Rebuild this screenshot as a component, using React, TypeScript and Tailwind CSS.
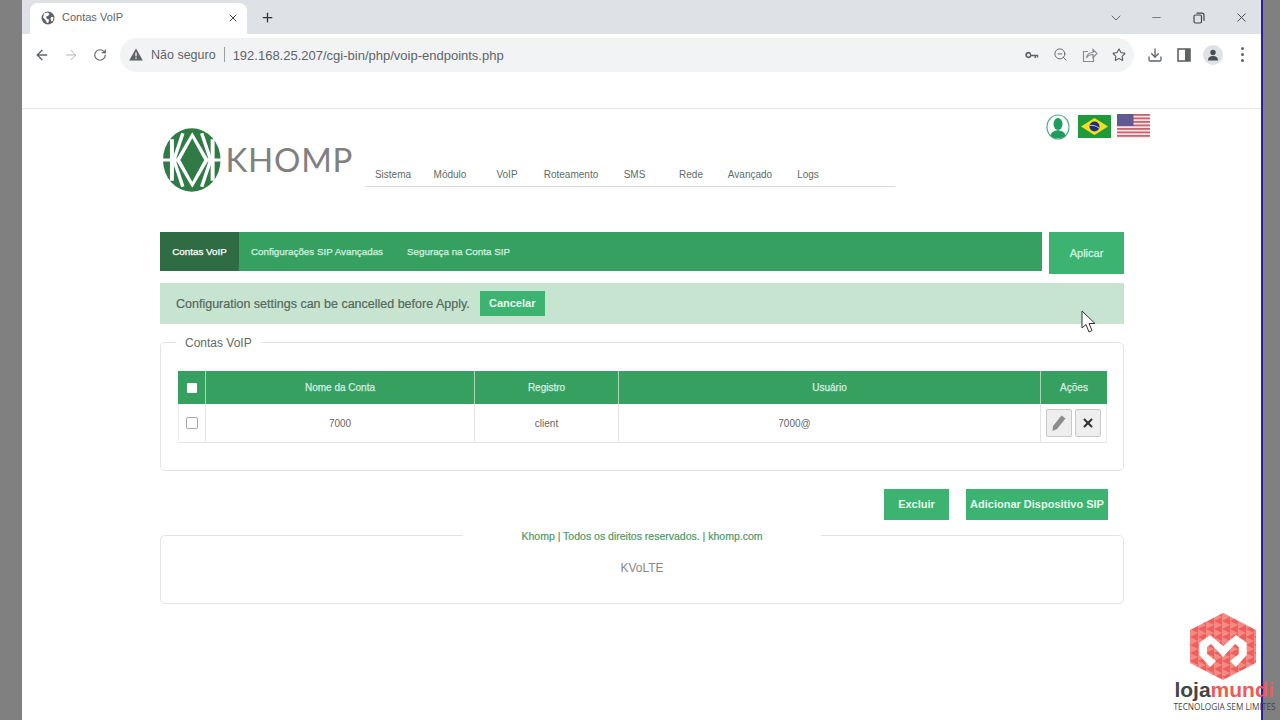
import { ArrowLeft, ArrowRight, RotateCw, ChevronDown, Minus, X, Plus, Star, Download, ZoomOut } from "lucide-react";

const navItems = [
  { label: "Sistema", width: "w-[56px]" },
  { label: "Módulo", width: "w-[58px]" },
  { label: "VoIP", width: "w-[56px]" },
  { label: "Roteamento", width: "w-[72px]" },
  { label: "SMS", width: "w-[55px]" },
  { label: "Rede", width: "w-[58px]" },
  { label: "Avançado", width: "w-[60px]" },
  { label: "Logs", width: "w-[56px]" },
];

function GlobeIcon() {
  return (
    <svg width="14" height="14" viewBox="0 0 14 14">
      <circle cx="7" cy="7" r="6.5" fill="#5f6368" />
      <path d="M3 2.5 L6.5 1.5 L8.5 3 L7 5 L5 5.5 L6 8 L8 8.5 L7.5 11.5 L6 12 L4.5 9 L2 6.5 Z" fill="#fff" />
      <path d="M10 6 L12.5 6 L12 9.5 L10.5 10.5 L9.5 8 Z" fill="#fff" />
    </svg>
  );
}

function KeyIcon() {
  return (
    <svg width="14" height="14" viewBox="0 0 14 14" fill="#5f6368">
      <path d="M3.5 3.8a3.2 3.2 0 1 0 2.9 4.5H9.5v1.6h1.4V8.3h.9v1.2h1.4V6.7H6.4a3.2 3.2 0 0 0-2.9-2.9zm0 1.7a1.5 1.5 0 1 1 0 3 1.5 1.5 0 0 1 0-3z" />
    </svg>
  );
}

function ShareIcon() {
  return (
    <svg width="16" height="16" viewBox="0 0 16 16" fill="none" stroke="#8a8d91" strokeWidth="1.2">
      <path d="M6 4.5H1.5v10h10V10" />
      <path d="M4.5 11c.5-3.5 3-5.5 6.5-5.5V2.5l4 4-4 4V7.5c-2.8 0-5 1-6.5 3.5z" />
    </svg>
  );
}

function SidePanelIcon() {
  return (
    <svg width="14" height="14" viewBox="0 0 14 14">
      <rect x="1" y="1" width="12" height="12" fill="none" stroke="#5f6368" strokeWidth="1.6" />
      <rect x="8" y="1" width="5" height="12" fill="#5f6368" />
    </svg>
  );
}

function KhompMark() {
  return (
    <svg width="60" height="66" viewBox="0 0 60 66">
      <ellipse cx="30" cy="33" rx="29" ry="32" fill="#2f7a45" />
      <path d="M30.5 5 L47 33 L30.5 61 L14 33 Z" fill="#fff" />
      <path d="M30.5 11 L42.5 33 L30.5 55 L18.5 33 Z" fill="#2f7a45" />
      <path d="M8 12 H12 V54 H8 Z M49 12 H53 V54 H49 Z" fill="#fff" />
      <path d="M0 31.5 H17 V34.5 H0 Z M44 31.5 H60 V34.5 H44 Z" fill="#fff" />
      <path d="M12 33 L21 6 M49 33 L40 6 M12 33 L21 60 M49 33 L40 60" stroke="#fff" strokeWidth="3.5" />
    </svg>
  );
}

function UserBadge() {
  return (
    <svg width="24" height="26" viewBox="0 0 24 26">
      <ellipse cx="12" cy="13" rx="11" ry="12" fill="#fff" stroke="#5aa888" strokeWidth="1.2" />
      <ellipse cx="12" cy="10" rx="4.5" ry="6" fill="#1f9d5c" />
      <path d="M4.5 22 C5 18 8 17 12 16 C16 17 19 18 19.5 22 C16 25 8 25 4.5 22z" fill="#1f9d5c" />
    </svg>
  );
}

function BrazilFlag() {
  return (
    <svg width="33" height="23" viewBox="0 0 33 23">
      <rect width="33" height="23" fill="#1f9a3a" />
      <path d="M16.5 3 L30 11.5 L16.5 20 L3 11.5 Z" fill="#f7df1e" />
      <circle cx="16.5" cy="11.5" r="5" fill="#1f2f7a" />
      <path d="M11.8 10.5 C14 10 18 10.5 21 13" stroke="#e8e8e8" strokeWidth="0.8" fill="none" />
    </svg>
  );
}

function UsaFlag() {
  const stripes = [0, 1, 2, 3, 4, 5, 6];
  return (
    <svg width="33" height="24" viewBox="0 0 33 24">
      <rect width="33" height="24" fill="#f6e6e8" />
      {stripes.map((s) => (
        <rect key={s} y={s * 3.5} width="33" height="1.8" fill="#c9646f" />
      ))}
      <rect width="16.5" height="12" fill="#5f5a92" />
    </svg>
  );
}

function LojaMundiMark() {
  return (
    <svg width="66" height="67" viewBox="0 0 66 67">
      <defs>
        <pattern id="tri" width="8" height="8" patternUnits="userSpaceOnUse">
          <rect width="8" height="8" fill="#ee5f5b" />
          <path d="M0 0 L8 4 L0 8 Z" fill="#f58a84" />
        </pattern>
      </defs>
      <path d="M33 0 L66 17 L66 50 L33 67 L0 50 L0 17 Z" fill="url(#tri)" />
      <path d="M9.3 30 L20 22 L33 33 L46 22 L56.7 30 L56.7 42 L46 54 L40 48 L49 41 L49 34 L45 31 L33 44 L21 31 L17 34 L17 41 L26 48 L20 54 L9.3 42 Z" fill="#fff" />
    </svg>
  );
}

function CursorIcon() {
  return (
    <svg width="16" height="24" viewBox="0 0 16 24">
      <path d="M1 1 L1 18 L5 14.5 L8 22 L11 20.5 L8 13.5 L14 13.5 Z" fill="#fff" stroke="#333" strokeWidth="1" />
    </svg>
  );
}

function PencilIcon() {
  return (
    <svg width="16" height="18" viewBox="0 0 16 18" fill="#8c8c8c">
      <path d="M10.5 1.5 L14.5 4.5 L6 15 L1.5 17 L2 12 Z" />
    </svg>
  );
}

function BrowserChrome() {
  return (
    <div className="shrink-0">
      <div className="flex h-[34px] items-end bg-[#dee1e6] pl-2">
        <div className="flex h-[31px] w-[217px] items-center rounded-t-lg bg-white pb-[2px] pl-[11px] pr-[8px]">
          <GlobeIcon />
          <span className="ml-[7px] flex-1 text-[11px] text-[#5f6368]">Contas VoIP</span>
          <X size={12} strokeWidth={2} className="text-[#444]" />
        </div>
        <div className="ml-[9px] flex h-[31px] w-[22px] items-center justify-center pb-[2px] text-[#333]">
          <Plus size={15} strokeWidth={2} />
        </div>
        <div className="flex h-[31px] flex-1 items-center justify-end pb-[2px] pr-[12px] text-[#5f6368]">
          <ChevronDown size={16} strokeWidth={1.5} className="mr-[26px]" />
          <Minus size={13} strokeWidth={1.5} className="mr-[30px]" />
          <svg width="12" height="12" viewBox="0 0 12 12" fill="none" stroke="#444" strokeWidth="1.2" className="mr-[29px]">
            <rect x="1" y="3" width="7.5" height="8" rx="1.5" />
            <path d="M3.5 1.2h5.5a2 2 0 0 1 2 2v5.5" />
          </svg>
          <X size={15} strokeWidth={1.5} className="text-[#444]" />
        </div>
      </div>
      <div className="flex h-[41px] items-center bg-white pl-[12px] pr-[10px]">
        <ArrowLeft size={16} strokeWidth={2} className="text-[#5f6368]" />
        <ArrowRight size={16} strokeWidth={1.5} className="ml-[13px] text-[#b4b6b9]" />
        <RotateCw size={14} strokeWidth={2} className="ml-[14px] text-[#5f6368]" />
        <div className="ml-[13px] flex h-[34px] w-[1014px] shrink-0 items-center rounded-full bg-[#f1f3f4] pl-[9px] pr-[8px]">
          <svg width="14" height="13" viewBox="0 0 14 13" fill="#5f6368">
            <path d="M7 0.5 L13.8 12.5 H0.2 Z" />
            <rect x="6.3" y="4.5" width="1.4" height="4" fill="#f1f3f4" />
            <rect x="6.3" y="9.5" width="1.4" height="1.4" fill="#f1f3f4" />
          </svg>
          <span className="ml-[8px] pt-[2px] text-[12.5px] text-[#5f6368]">Não seguro</span>
          <span className="mx-[8px] h-[15px] w-px bg-[#9aa0a6]" />
          <span className="flex-1 pt-[2px] text-[13px] text-[#5f6368]">192.168.25.207/cgi-bin/php/voip-endpoints.php</span>
          <div className="flex items-center gap-[14px]">
            <KeyIcon />
            <ZoomOut size={15} strokeWidth={1.5} className="text-[#5f6368]" />
            <ShareIcon />
            <Star size={14} strokeWidth={2} className="text-[#5f6368]" />
          </div>
        </div>
        <Download size={16} strokeWidth={2} className="ml-[13px] text-[#5f6368]" />
        <div className="ml-[14px]"><SidePanelIcon /></div>
        <div className="ml-[12px] flex h-5 w-5 items-center justify-center rounded-full bg-[#dee1e6]">
          <svg width="12" height="12" viewBox="0 0 12 12" fill="#4a4d52">
            <circle cx="6" cy="3.5" r="2.7" />
            <path d="M1 11.5 C1 8 3.5 7 6 7 C8.5 7 11 8 11 11.5 Z" />
          </svg>
        </div>
        <div className="ml-[18px] flex flex-col gap-[3px]">
          <span className="h-[3px] w-[3px] rounded-full bg-[#5f6368]" />
          <span className="h-[3px] w-[3px] rounded-full bg-[#5f6368]" />
          <span className="h-[3px] w-[3px] rounded-full bg-[#5f6368]" />
        </div>
      </div>
    </div>
  );
}

function Header() {
  return (
    <div className="flex h-[123px] pl-[140px]">
      <div className="mt-[18px] flex h-[66px] w-[191px] shrink-0 items-center">
        <KhompMark />
        <span className="ml-[4px] font-['Lato',sans-serif] text-[33px] font-normal tracking-[0.7px] text-[#808080]">KHOMP</span>
      </div>
      <div className="ml-[12px] mt-[58px] h-[20px] w-[530px] shrink-0 border-b border-[#d8d8d8] pt-px">
        <div className="flex">
          {navItems.map((item) => (
            <span key={item.label} className={`${item.width} text-center text-[10px] leading-[14px] text-[#5d6d65]`}>
              {item.label}
            </span>
          ))}
        </div>
      </div>
      <div className="ml-[151px] mt-[5px] flex h-[26px] items-start gap-[6px]">
        <UserBadge />
        <div className="ml-[2px] mt-[1px]"><BrazilFlag /></div>
        <UsaFlag />
      </div>
    </div>
  );
}

function Tabs() {
  return (
    <div className="flex items-start gap-[7px]">
      <div className="flex h-[39px] w-[882px] items-center bg-[#36a061] text-[9.8px] text-[#d7efe0] [-webkit-text-stroke:0.25px]">
        <div className="flex h-full w-[79px] items-center justify-center bg-[#2f6b43] pt-px text-white">Contas VoIP</div>
        <span className="ml-[12px] pt-px">Configurações SIP Avançadas</span>
        <span className="ml-[24px] pt-px">Seguraça na Conta SIP</span>
      </div>
      <button className="h-[42px] w-[75px] bg-[#3cb371] text-[11px] text-[#d7f3e2] [-webkit-text-stroke:0.25px]">Aplicar</button>
    </div>
  );
}

function Alert() {
  return (
    <div className="mt-[9px] flex h-[41px] items-center bg-[#c7e4d0] pl-[16px]">
      <span className="pt-px text-[12.5px] text-[#55685c] [-webkit-text-stroke:0.2px]">Configuration settings can be cancelled before Apply.</span>
      <button className="ml-[10px] h-[25px] w-[65px] bg-[#3cb371] text-[11px] font-bold text-[#e6f7ec]">Cancelar</button>
    </div>
  );
}

function AccountsTable() {
  return (
    <fieldset className="mt-[9px] h-[138px] rounded-[5px] border border-[#e4e4e4] pl-[17px] pr-[16px]">
      <legend className="-ml-[2px] px-[9px] pt-[2px] text-[12px] leading-[16px] text-[#5f6b64]">Contas VoIP</legend>
      <div className="mt-[20px] border-b border-[#e4e4e4]">
        <div className="flex h-[33px] bg-[#36a061] text-[10px] text-[#d7efe0] [-webkit-text-stroke:0.25px]">
          <div className="flex w-[28px] items-center justify-center border-r border-[#a5d6b7]">
            <span className="h-[10px] w-[10px] rounded-[1px] bg-white" />
          </div>
          <div className="flex w-[269px] items-center justify-center border-r border-[#a5d6b7]">Nome da Conta</div>
          <div className="flex w-[144px] items-center justify-center border-r border-[#a5d6b7]">Registro</div>
          <div className="flex w-[422px] items-center justify-center border-r border-[#a5d6b7]">Usuário</div>
          <div className="flex flex-1 items-center justify-center">Ações</div>
        </div>
        <div className="flex h-[38px] border-l border-r border-[#ececec] text-[10px] text-[#666]">
          <div className="-ml-px flex w-[28px] items-center justify-center border-r border-[#e4e4e4]">
            <span className="h-[12px] w-[12px] rounded-[2px] border border-[#aaa] bg-white" />
          </div>
          <div className="flex w-[269px] items-center justify-center border-r border-[#e4e4e4]">7000</div>
          <div className="flex w-[144px] items-center justify-center border-r border-[#e4e4e4]">client</div>
          <div className="flex w-[422px] items-center justify-center border-r border-[#e4e4e4] pr-[70px]">7000@</div>
          <div className="flex flex-1 items-center justify-center gap-[3px]">
            <button className="flex h-[28px] w-[26px] items-center justify-center rounded-[2px] border border-[#c8c8c8] bg-[#eeeeee]">
              <PencilIcon />
            </button>
            <button className="flex h-[28px] w-[26px] items-center justify-center rounded-[2px] border border-[#c8c8c8] bg-[#eeeeee] text-[#333]">
              <X size={14} strokeWidth={3.5} />
            </button>
          </div>
        </div>
      </div>
    </fieldset>
  );
}

function Actions() {
  return (
    <div className="mt-[18px] flex justify-end gap-[17px] pr-[16px]">
      <button className="h-[31px] w-[65px] bg-[#3cb371] text-[11px] font-bold text-[#e6f7ec]">Excluir</button>
      <button className="h-[31px] w-[142px] bg-[#3cb371] text-[11px] font-bold text-[#e6f7ec]">Adicionar Dispositivo SIP</button>
    </div>
  );
}

function Footer() {
  return (
    <fieldset className="mt-[6px] h-[78px] rounded-[5px] border border-[#e4e4e4]">
      <legend className="mx-auto w-[358px] pt-[2px] text-center text-[10.5px] leading-[16px] text-[#4a9a68] [-webkit-text-stroke:0.2px]">
        Khomp | Todos os direitos reservados. | khomp.com
      </legend>
      <div className="mt-[16px] text-center text-[12px] leading-[16px] text-[#888]">KVoLTE</div>
    </fieldset>
  );
}

export default function App() {
  return (
    <div className="relative flex h-[720px] w-[1280px] overflow-hidden bg-[#808080] font-['Liberation_Sans',sans-serif]">
      <div className="w-[22px] shrink-0" />
      <div className="flex w-[1239px] shrink-0 flex-col bg-white">
        <BrowserChrome />
        <div className="h-[34px] shrink-0 border-b border-[#e6e6e6]" />
        <Header />
        <div className="ml-[138px] w-[964px]">
          <Tabs />
          <Alert />
          <AccountsTable />
          <Actions />
          <Footer />
        </div>
      </div>
      <div className="w-[2px] shrink-0 bg-[#2a1fa0]" />

      <div className="absolute left-[1081px] top-[310px]"><CursorIcon /></div>
      <div className="absolute left-[1170px] top-[613px] flex w-[106px] flex-col items-center">
        <LojaMundiMark />
        <div className="ml-[2px] mt-[-1px] text-[21px] font-bold leading-[22px]">
          <span className="text-[#444]">loja</span>
          <span className="text-[#ef5a56]">mundi</span>
        </div>
        <div className="ml-[3px] whitespace-nowrap font-['Open_Sans',sans-serif] text-[8.25px] leading-[12px] text-[#444]">TECNOLOGIA SEM LIMITES</div>
      </div>
    </div>
  );
}
